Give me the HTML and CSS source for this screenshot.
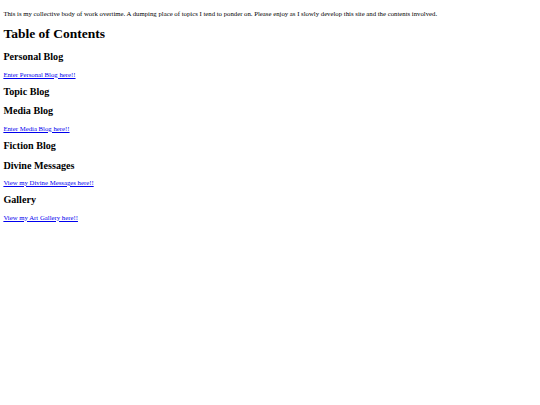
FILE: index.html
```html
<!DOCTYPE html>
<html lang="en">
<head>
  <meta charset="UTF-8">
  <title>Table of Contents</title>
  <link rel="stylesheet" href="styles.css">
</head>
<body>

  <p>This is my collective body of work overtime. A dumping place of topics I tend to ponder on. Please enjoy as I slowly develop this site and the contents involved.</p>

  <h1>Table of Contents</h1>

  <h2>Personal Blog</h2>
  <p><a href="#">Enter Personal Blog here!!</a></p>

  <h2>Topic Blog</h2>

  <h2>Media Blog</h2>
  <p><a href="#">Enter Media Blog here!!</a></p>

  <h2>Fiction Blog</h2>

  <h2>Divine Messages</h2>
  <p><a href="#">View my Divine Messages here!!</a></p>

  <h2>Gallery</h2>
  <p><a href="#">View my Art Gallery here!!</a></p>

</body>
</html>
```

FILE: styles.css
```css
body {
  font-family: "Liberation Serif", "Times New Roman", serif;
  font-size: 6.75px;
  margin: 3.375px;
  color: #000;
  background-color: #fff;
}

h1 {
  font-size: 2em;
  margin: 0.67em 0;
}

h2 {
  font-size: 1.5em;
  margin: 0.83em 0;
}

p {
  margin: 1em 0;
}

a {
  color: #0000ee;
}
```
